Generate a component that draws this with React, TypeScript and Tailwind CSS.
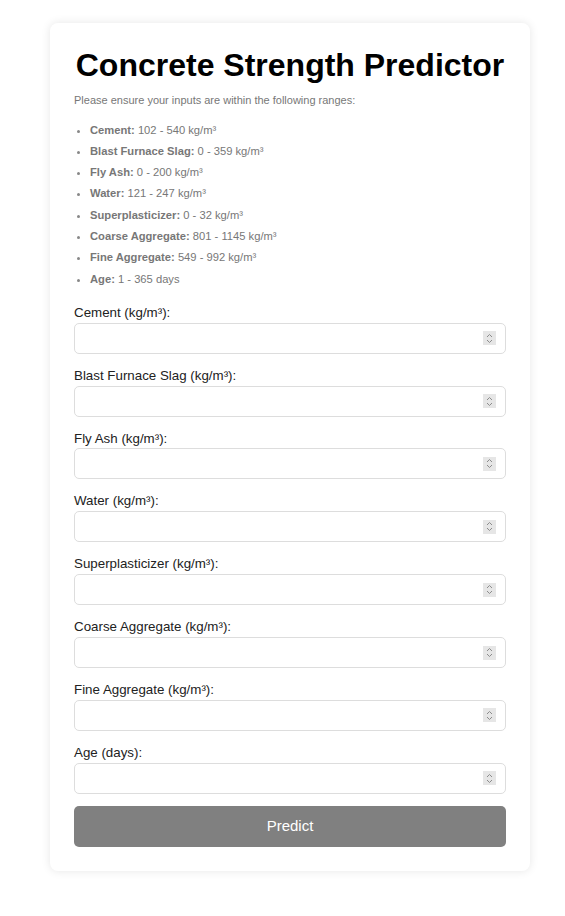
import React from 'react';

const ranges: { name: string; range: string }[] = [
  { name: 'Cement', range: '102 - 540 kg/m³' },
  { name: 'Blast Furnace Slag', range: '0 - 359 kg/m³' },
  { name: 'Fly Ash', range: '0 - 200 kg/m³' },
  { name: 'Water', range: '121 - 247 kg/m³' },
  { name: 'Superplasticizer', range: '0 - 32 kg/m³' },
  { name: 'Coarse Aggregate', range: '801 - 1145 kg/m³' },
  { name: 'Fine Aggregate', range: '549 - 992 kg/m³' },
  { name: 'Age', range: '1 - 365 days' },
];

const fields: { id: string; label: string }[] = [
  { id: 'cement', label: 'Cement (kg/m³):' },
  { id: 'slag', label: 'Blast Furnace Slag (kg/m³):' },
  { id: 'ash', label: 'Fly Ash (kg/m³):' },
  { id: 'water', label: 'Water (kg/m³):' },
  { id: 'superplasticizer', label: 'Superplasticizer (kg/m³):' },
  { id: 'coarse', label: 'Coarse Aggregate (kg/m³):' },
  { id: 'fine', label: 'Fine Aggregate (kg/m³):' },
  { id: 'age', label: 'Age (days):' },
];

function Spinner() {
  return (
    <div className="pointer-events-none absolute top-1/2 right-[10px] flex h-[14px] w-[13px] -translate-y-1/2 items-center justify-center bg-[#e6e6e6]">
      <svg width="7" height="11" viewBox="0 0 7 11" fill="none" stroke="#8c8c8c" strokeWidth="1">
        <path d="M1 4 L3.5 1.5 L6 4" />
        <path d="M1 7 L3.5 9.5 L6 7" />
      </svg>
    </div>
  );
}

export default function App() {
  const [values, setValues] = React.useState<Record<string, string>>({});

  return (
    <div className="min-h-screen bg-white pt-[23px] pb-[45px] font-['Liberation_Sans',Arial,sans-serif]">
      <div className="ml-[50px] w-[480px] rounded-lg bg-white p-6 shadow-[0_0_10px_rgba(0,0,0,0.1)]">
        <h1 className="text-center text-[32px] leading-[37px] font-bold text-black">Concrete Strength Predictor</h1>
        <p className="mt-[10px] text-[11px] leading-[12.5px] text-[#777]">
          Please ensure your inputs are within the following ranges:
        </p>
        <ul className="mt-[13px] list-disc pl-4 text-[11.2px] leading-[21.3px] text-[#777] marker:text-[#888]">
          {ranges.map((r) => (
            <li key={r.name}>
              <strong className="font-bold">{r.name}:</strong> {r.range}
            </li>
          ))}
        </ul>
        <form className="mt-[15px]" onSubmit={(e) => e.preventDefault()}>
          {fields.map((f) => (
            <div key={f.id} className="mb-[14px]">
              <label htmlFor={f.id} className="block text-[13.33px] leading-[15.86px] text-[#222]">
                {f.label}
              </label>
              <div className="relative mt-[2px]">
                <input
                  id={f.id}
                  type="number"
                  value={values[f.id] ?? ''}
                  onChange={(e) => setValues({ ...values, [f.id]: e.target.value })}
                  className="block h-[31px] w-full rounded-[5px] border border-[#ddd] px-2 text-[13.33px] outline-none [appearance:textfield] [&::-webkit-inner-spin-button]:appearance-none"
                />
                <Spinner />
              </div>
            </div>
          ))}
          <button
            type="submit"
            className="-mt-[2px] block h-[41px] w-full rounded-[5px] bg-[#808080] text-[15px] text-white"
          >
            Predict
          </button>
        </form>
      </div>
    </div>
  );
}
